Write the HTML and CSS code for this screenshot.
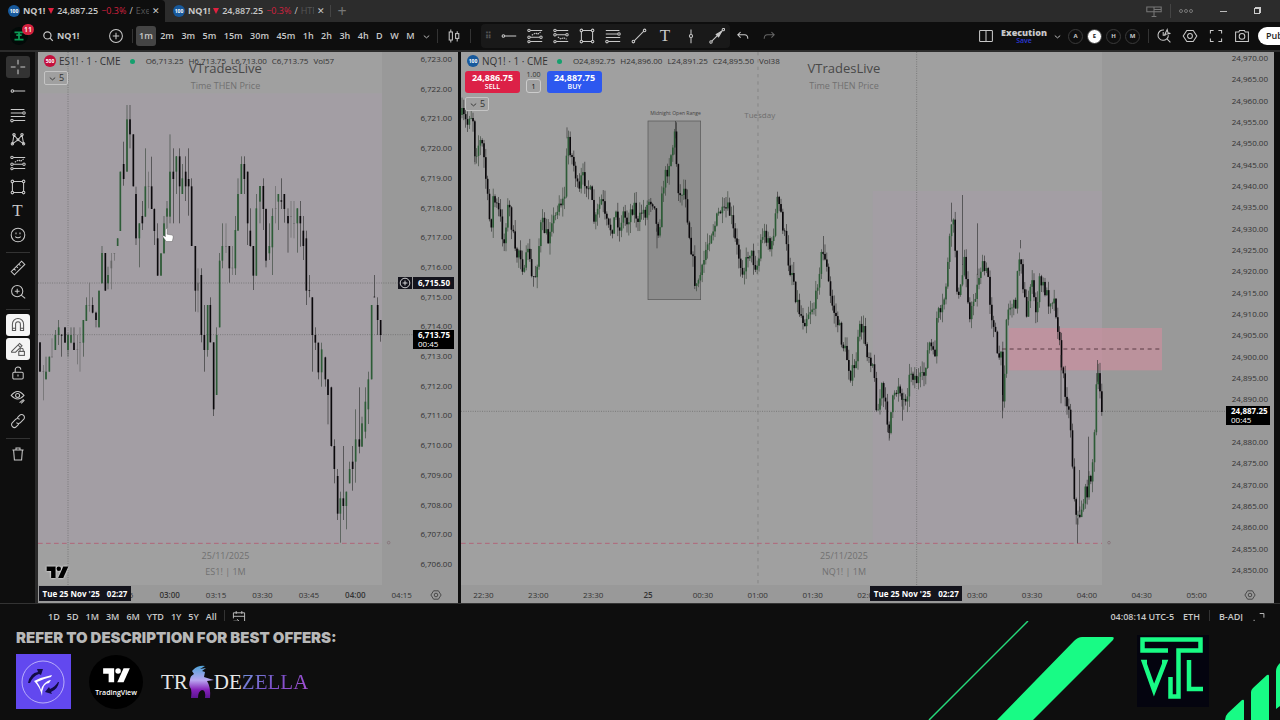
FILE: index.html
```
<!DOCTYPE html>
<html lang="en">
<head>
  <meta charset="UTF-8">
  <meta name="viewport" content="width=device-width, initial-scale=1">
  <title>NQ1! 24,887.25 -0.3% / Execution</title>
  <link rel="stylesheet" href="styles.css">
</head>
<body>

  <!-- ──────────  ICONS  ────────── -->
  <svg class="sprite" aria-hidden="true">
    <symbol id="i-cross" viewBox="0 0 20 20"><path d="M10 1v6M10 13v6M1 10h6M13 10h6"/></symbol>
    <symbol id="i-ray" viewBox="0 0 20 20"><circle cx="3" cy="10" r="1.600"/><path d="M4.600 10H19"/></symbol>
    <symbol id="i-fib" viewBox="0 0 20 20"><path d="M1 3h17M1 7.500h15M1 12h18M4 17h15"/><circle cx="17.500" cy="7.500" r="1.600"/><circle cx="2.500" cy="17" r="1.600"/></symbol>
    <symbol id="i-pattern" viewBox="0 0 20 20"><path d="M3 16 5 5l5 6 5-6 2 11-7-5zM5 5l-2 11"/><circle cx="3" cy="16" r="1.500"/><circle cx="5" cy="4.500" r="1.500"/><circle cx="15" cy="4.500" r="1.500"/><circle cx="17" cy="16" r="1.500"/><circle cx="10" cy="11" r="1.200"/></symbol>
    <symbol id="i-position" viewBox="0 0 20 20"><circle cx="2.500" cy="3" r="1.500"/><path d="M4 3h15M4 11.500h12M4 17h15"/><path d="M6 9l5-3 2 2 4-3" stroke-dasharray="2 1"/><circle cx="2.500" cy="11.500" r="1.500"/><circle cx="17.500" cy="11.500" r="1.500"/><circle cx="2.500" cy="17" r="1.500"/></symbol>
    <symbol id="i-short" viewBox="0 0 20 20"><circle cx="2.500" cy="3" r="1.500"/><path d="M4 3h15M4 8.500h12M4 17h15"/><path d="M6 11l4 3 3-2 4 2" stroke-dasharray="2 1"/><circle cx="2.500" cy="8.500" r="1.500"/><circle cx="17.500" cy="8.500" r="1.500"/><circle cx="2.500" cy="17" r="1.500"/></symbol>
    <symbol id="i-rect" viewBox="0 0 20 20"><path d="M4 3h12M4 17h12M3 4v12M17 4v12"/><circle cx="3" cy="3" r="1.600"/><circle cx="17" cy="3" r="1.600"/><circle cx="3" cy="17" r="1.600"/><circle cx="17" cy="17" r="1.600"/></symbol>
    <symbol id="i-smile" viewBox="0 0 20 20"><circle cx="10" cy="10" r="8.500"/><path d="M7.500 7v2M12.500 7v2M6.500 12q3.500 3 7 0"/></symbol>
    <symbol id="i-ruler" viewBox="0 0 20 20"><path d="M1.500 14.500 14.500 1.500l4 4-13 13zM5 11l2 2M8 8l2 2M11 5l2 2"/></symbol>
    <symbol id="i-zoom" viewBox="0 0 20 20"><circle cx="9" cy="9" r="7"/><path d="M14 14l5 4M6 9h6M9 6v6"/></symbol>
    <symbol id="i-magnet" viewBox="0 0 20 20"><path d="M3 17V9a7 7 0 0 1 14 0v8h-4V9a3 3 0 0 0-6 0v8zM3 14h4M13 14h4"/></symbol>
    <symbol id="i-pencil" viewBox="0 0 20 20"><path d="M2 13 12 3l3 3-8 8H2zM10 5l3 3"/><rect x="11" y="13" width="7" height="5"/><path d="M12.500 13v-2a2 2 0 0 1 4 0v2"/></symbol>
    <symbol id="i-lock" viewBox="0 0 20 20"><rect x="3.500" y="9" width="13" height="8.500" rx="1.500"/><path d="M6.500 9V6a3.500 3.500 0 0 1 7 0M10 12v2.500"/></symbol>
    <symbol id="i-eye" viewBox="0 0 20 20"><path d="M1.500 8q8-10 16 0-8 9-16 0z"/><circle cx="9.500" cy="8" r="2.500"/><path d="M12 17l5-4M14 18l4-4"/></symbol>
    <symbol id="i-link" viewBox="0 0 20 20"><path d="M9 6l3-3a3.500 3.500 0 0 1 5 5l-4 4a3.500 3.500 0 0 1-5 0M11 14l-3 3a3.500 3.500 0 0 1-5-5l4-4a3.500 3.500 0 0 1 5 0"/></symbol>
    <symbol id="i-trash" viewBox="0 0 20 20"><path d="M3 5h14M7.500 5V2.500h5V5M4.500 5l1 12.500h9l1-12.500"/></symbol>
    <symbol id="i-trend" viewBox="0 0 20 20"><path d="M4 16 16 4"/><circle cx="3" cy="17" r="1.600"/><circle cx="17" cy="3" r="1.600"/></symbol>
    <symbol id="i-vline" viewBox="0 0 20 20"><path d="M10 2v6M10 12v7"/><circle cx="10" cy="10" r="2"/></symbol>
    <symbol id="i-arrow" viewBox="0 0 20 20"><path d="M3.500 16.500 17 3"/><path class="solid" d="M9 8l7-4-4 7z"/><circle cx="2.500" cy="17.500" r="1.500"/><circle cx="18" cy="2" r="1.500"/></symbol>
    <symbol id="i-undo" viewBox="0 0 20 20"><path d="M7 5 3.500 8.500 7 12M3.500 8.500H12q4 0 4 5"/></symbol>
    <symbol id="i-redo" viewBox="0 0 20 20"><path d="M13 5l3.500 3.500L13 12M16.500 8.500H8q-4 0-4 5"/></symbol>
    <symbol id="i-candles" viewBox="0 0 20 20"><path d="M6 2v3M6 15v3M14 4v3M14 13v4"/><rect x="4" y="5" width="4" height="10"/><rect x="12" y="7" width="4" height="6"/></symbol>
    <symbol id="i-search" viewBox="0 0 20 20"><circle cx="9" cy="9" r="6"/><path d="M13.500 13.500 18 18"/></symbol>
    <symbol id="i-plus" viewBox="0 0 20 20"><circle cx="10" cy="10" r="8"/><path d="M6 10h8M10 6v8"/></symbol>
    <symbol id="i-caret" viewBox="0 0 20 20"><path d="M4 8l6 5 6-5"/></symbol>
    <symbol id="i-layout" viewBox="0 0 20 20"><rect x="2" y="3" width="16" height="14" rx="1"/><path d="M10 3v14"/></symbol>
    <symbol id="i-replay" viewBox="0 0 20 20"><path d="M10 2.500A6.500 6.500 0 1 0 15.500 9M14 14l4 4M9 5v4h3M11 8l3-6 1 4 3 1z"/></symbol>
    <symbol id="i-hex" viewBox="0 0 20 20"><path d="M6 3h8l4.500 7-4.500 7H6L1.500 10z"/><circle cx="10" cy="10" r="3"/></symbol>
    <symbol id="i-full" viewBox="0 0 20 20"><path d="M3 7V3h4M13 3h4v4M17 13v4h-4M7 17H3v-4"/></symbol>
    <symbol id="i-corner" viewBox="0 0 20 20"><path d="M11 5h6v6M3 14v6h5"/></symbol>
    <symbol id="i-camera" viewBox="0 0 20 20"><path d="M2 5h4l1-2h6l1 2h4v12H2z"/><circle cx="10" cy="10.500" r="3.500"/></symbol>
    <symbol id="i-calendar" viewBox="0 0 20 20"><path d="M2 12V4h16v16M2 9h16M6 1.500v4M14 1.500v4M2 16h8M7 13l3 3-3 3"/></symbol>
    <symbol id="i-sign" viewBox="0 0 20 20"><path d="M1 5h18v6H1zM10 5v12M7 17h6M10 8h9"/></symbol>
    <symbol id="i-tv" viewBox="0 0 36 28"><path class="solid" d="M1 4h14v18H8V11H1z"/><circle class="solid" cx="20" cy="7.500" r="3.500"/><path class="solid" d="M27 4h8l-8 18h-8z"/></symbol>
  </svg>

  <!-- ──────────  TABS  ────────── -->
  <nav class="tabs" aria-label="Open layouts">
    <div class="tab active">
      <span class="badge blue">100</span><b>NQ1!</b><i class="down"></i><b class="price">24,887.25</b><span class="change">−0.3%</span><span>/</span><span class="fade">Exe</span>
      <button class="close" aria-label="Close tab">✕</button>
    </div>
    <div class="tab">
      <span class="badge blue">100</span><b>NQ1!</b><i class="down"></i><b class="price">24,887.25</b><span class="change">−0.3%</span><span>/</span><span class="fade">HTF</span>
      <button class="close" aria-label="Close tab">✕</button>
    </div>
    <button class="new-tab" aria-label="New tab">+</button>
    <div class="window-buttons">
      <svg class="icon dim"><use href="#i-sign"/></svg>
      <span class="sep"></span>
      <span class="more"><i></i><i></i><i></i></span>
      <button aria-label="Minimise"><span class="minimise"></span></button>
      <button aria-label="Restore"><span class="restore"></span></button>
    </div>
  </nav>

  <!-- ──────────  TOOLBAR  ────────── -->
  <header class="toolbar">
    <button class="avatar" aria-label="Account">
      <svg viewBox="0 0 20 20"><path d="M5 6h10M7 9h6M10 6v7M5 14h10"/></svg>
      <span class="count">11</span>
    </button>
    <button class="symbol"><svg class="icon"><use href="#i-search"/></svg>NQ1!</button>
    <button class="tool" aria-label="Compare"><svg class="icon"><use href="#i-plus"/></svg></button>
    <span class="sep"></span>
    <div class="frames">
      <button class="active">1m</button><button>2m</button><button>3m</button><button>5m</button><button>15m</button><button>30m</button><button>45m</button><button>1h</button><button>2h</button><button>3h</button><button>4h</button><button>D</button><button>W</button><button>M</button>
      <button aria-label="More intervals"><svg class="icon tiny"><use href="#i-caret"/></svg></button>
    </div>
    <span class="sep"></span>
    <button class="tool wide" aria-label="Candles"><svg class="icon"><use href="#i-candles"/></svg></button>
    <span class="sep"></span>
    <div class="favourites">
      <span class="grip">⠿</span>
      <button class="tool" aria-label="Horizontal ray"><svg class="icon"><use href="#i-ray"/></svg></button>
      <button class="tool" aria-label="Long position"><svg class="icon"><use href="#i-position"/></svg></button>
      <button class="tool" aria-label="Short position"><svg class="icon"><use href="#i-short"/></svg></button>
      <button class="tool" aria-label="Rectangle"><svg class="icon"><use href="#i-rect"/></svg></button>
      <button class="tool" aria-label="Fib retracement"><svg class="icon"><use href="#i-fib"/></svg></button>
      <button class="tool" aria-label="Trend line"><svg class="icon"><use href="#i-trend"/></svg></button>
      <button class="tool letter">T</button>
      <button class="tool" aria-label="Vertical line"><svg class="icon"><use href="#i-vline"/></svg></button>
      <button class="tool" aria-label="Arrow"><svg class="icon"><use href="#i-arrow"/></svg></button>
    </div>
    <button class="tool" aria-label="Undo"><svg class="icon"><use href="#i-undo"/></svg></button>
    <button class="tool faint" aria-label="Redo"><svg class="icon"><use href="#i-redo"/></svg></button>

    <div class="right-tools">
      <button class="tool" aria-label="Layout"><svg class="icon"><use href="#i-layout"/></svg></button>
      <button class="layout-name"><b>Execution</b><span>Save</span></button>
      <button class="caret" aria-label="Manage layouts"><svg class="icon tiny"><use href="#i-caret"/></svg></button>
      <button class="round">A</button><button class="round active">E</button><button class="round">H</button><button class="round">M</button>
      <span class="sep"></span>
      <button class="tool" aria-label="Quick search"><svg class="icon"><use href="#i-replay"/></svg></button>
      <button class="tool" aria-label="Settings"><svg class="icon"><use href="#i-hex"/></svg></button>
      <button class="tool" aria-label="Fullscreen"><svg class="icon"><use href="#i-full"/></svg></button>
      <button class="tool" aria-label="Snapshot"><svg class="icon"><use href="#i-camera"/></svg></button>
      <button class="publish">Publish</button>
    </div>
  </header>

  <main class="workspace">
    <!-- Drawing tools -->
    <aside class="sidebar">
      <button class="on" aria-label="Cross"><svg class="icon"><use href="#i-cross"/></svg></button>
      <button aria-label="Lines"><svg class="icon"><use href="#i-ray"/></svg></button>
      <button aria-label="Fibonacci"><svg class="icon"><use href="#i-fib"/></svg></button>
      <button aria-label="Patterns"><svg class="icon"><use href="#i-pattern"/></svg></button>
      <button aria-label="Forecast"><svg class="icon"><use href="#i-position"/></svg></button>
      <button aria-label="Shapes"><svg class="icon"><use href="#i-rect"/></svg></button>
      <button class="letter">T</button>
      <button aria-label="Emoji"><svg class="icon"><use href="#i-smile"/></svg></button>
      <hr>
      <button aria-label="Measure"><svg class="icon"><use href="#i-ruler"/></svg></button>
      <button aria-label="Zoom in"><svg class="icon"><use href="#i-zoom"/></svg></button>
      <hr>
      <button class="lit" aria-label="Magnet"><svg class="icon"><use href="#i-magnet"/></svg></button>
      <button class="lit" aria-label="Stay in drawing mode"><svg class="icon"><use href="#i-pencil"/></svg></button>
      <button aria-label="Lock drawings"><svg class="icon"><use href="#i-lock"/></svg></button>
      <button aria-label="Hide drawings"><svg class="icon"><use href="#i-eye"/></svg></button>
      <button aria-label="Sync drawings"><svg class="icon"><use href="#i-link"/></svg></button>
      <hr>
      <button aria-label="Remove"><svg class="icon"><use href="#i-trash"/></svg></button>
    </aside>

    <div class="charts">
      <!-- ES -->
      <section class="chart es">
        <div class="plot">
          <svg class="canvas" viewBox="6 -129 1125 1599" preserveAspectRatio="none">
            <rect class="margin" x="1038" y="-129" width="100" height="1599"/>
            <rect class="session" x="6" y="-5" width="1032" height="1350"/>
            <path class="dots" d="M96-129V1470M6 564H1131M6 719H1131"/>
            <path class="low-line" d="M6 1345H1038"/>
            <circle class="low-mark" cx="1058" cy="1343" r="4"/>
            <g id="esCandles"></g>
          </svg>
          <div class="watermark top"><p class="name">VTradesLive</p><p>Time THEN Price</p></div>
          <div class="watermark bottom"><p>25/11/2025</p><p>ES1! | 1M</p></div>
          <div class="legend">
            <div class="legend-row"><span class="badge red">500</span><span class="title">ES1! · 1 · CME</span><i class="live"></i><span class="ohlc">O6,713.25</span><span class="ohlc">H6,713.75</span><span class="ohlc">L6,713.00</span><span class="ohlc">C6,713.75</span><span class="ohlc">Vol57</span></div>
            <button class="collapse"><svg class="icon tiny"><use href="#i-caret"/></svg>5</button>
          </div>
          <svg class="tv-mark"><use href="#i-tv"/></svg>
          <svg class="hand" viewBox="0 0 14 17"><path d="M4 1q1-1 2 0v6l6 1q1.500 1 1 3l-1 4.500H5L1 10q0-2 2-1l1 1z"/></svg>
        </div>
        <div class="prices" id="esPrices"></div>
        <div class="tag cursor"><button aria-label="Add alert"><svg class="icon"><use href="#i-plus"/></svg></button><b>6,715.50</b></div>
        <div class="tag last"><b>6,713.75</b><span>00:45</span></div>
        <div class="times"><span>02:45</span><b>03:00</b><span>03:15</span><span>03:30</span><span>03:45</span><b>04:00</b><span>04:15</span><svg class="icon"><use href="#i-hex"/></svg></div>
        <b class="time-tag"><span>Tue 25 Nov '25</span><span>02:27</span></b>
      </section>

      <!-- NQ -->
      <section class="chart nq">
        <div class="plot">
          <svg class="canvas" viewBox="9 -129 2298 1599" preserveAspectRatio="none">
            <rect class="margin" x="1932" y="-129" width="400" height="1599"/>
            <rect class="session" x="1244" y="288" width="688" height="1056"/>
            <rect class="range" x="570" y="78" width="158" height="536"/>
            <path class="dash" d="M900-129V1470"/>
            <path class="dots" d="M1376-129V1470M9 949H2307"/>
            <path class="low-line" d="M9 1345H1932"/>
            <circle class="low-mark" cx="1953" cy="1343" r="4"/>
            <rect class="zone" x="1653" y="699" width="459" height="127"/>
            <path class="zone-mid" d="M1632 762H2112"/>
            <g id="nqCandles"></g>
          </svg>
          <div class="watermark top"><p class="name">VTradesLive</p><p>Time THEN Price</p></div>
          <div class="watermark bottom"><p>25/11/2025</p><p>NQ1! | 1M</p></div>
          <span class="note range-note">Midnight Open Range</span>
          <span class="note day-note">Tuesday</span>
          <div class="legend">
            <div class="legend-row"><span class="badge blue">100</span><span class="title">NQ1! · 1 · CME</span><i class="live"></i><span class="ohlc">O24,892.75</span><span class="ohlc">H24,896.00</span><span class="ohlc">L24,891.25</span><span class="ohlc">C24,895.50</span><span class="ohlc">Vol38</span></div>
            <div class="order-row">
              <button class="order sell"><b>24,886.75</b><span>SELL</span></button>
              <label class="qty"><span>1.00</span><input type="text" value="1"></label>
              <button class="order buy"><b>24,887.75</b><span>BUY</span></button>
            </div>
            <button class="collapse"><svg class="icon tiny"><use href="#i-caret"/></svg>5</button>
          </div>
        </div>
        <div class="prices" id="nqPrices"></div>
        <div class="tag last"><b>24,887.25</b><span>00:45</span></div>
        <div class="times"><span>22:30</span><span>23:00</span><span>23:30</span><b>25</b><span>00:30</span><span>01:00</span><span>01:30</span><span>02:00</span><span></span><span>03:00</span><span>03:30</span><span>04:00</span><span>04:30</span><span>05:00</span><svg class="icon"><use href="#i-hex"/></svg></div>
        <b class="time-tag"><span>Tue 25 Nov '25</span><span>02:27</span></b>
      </section>
    </div>
  </main>

  <!-- ──────────  RANGE BAR  ────────── -->
  <div class="range-bar">
    <button>1D</button><button>5D</button><button>1M</button><button>3M</button><button>6M</button><button>YTD</button><button>1Y</button><button>5Y</button><button>All</button>
    <span class="sep"></span>
    <button aria-label="Go to date"><svg class="icon"><use href="#i-calendar"/></svg></button>
    <div class="session-info"><button>04:08:14 UTC-5</button><button>ETH</button><span class="sep"></span><button>B-ADJ</button><button aria-label="Maximise"><svg class="icon"><use href="#i-corner"/></svg></button></div>
  </div>

  <!-- ──────────  SPONSORS  ────────── -->
  <footer class="footer">
    <h2>REFER TO DESCRIPTION FOR BEST OFFERS:</h2>
    <div class="sponsors">
      <svg class="purple-logo" viewBox="0 0 55 55">
        <circle cx="27" cy="28" r="21"/>
        <path class="navy" d="M12 29Q14 19 22 18l-1-3 6 0-2 6-2-1q-6 2-9 9zM43 28q-1 7-8 10l1 2-7-2 4-5 1 2q5-2 8-7z"/>
        <path class="white" d="M18 27q8-4 18-6l-1 2q-8 2-14 5 3 4 4 8 1-4 3-6 4-4 7-4l-2 3q-3 0-5 3-2 4-2 10-2-9-8-15z"/>
      </svg>
      <div class="tv-logo"><svg><use href="#i-tv"/></svg><span>TradingView</span></div>
      <div class="zella">
        <span>TR</span>
        <svg viewBox="0 0 26 34">
          <defs><linearGradient id="beast" x2="0" y2="1"><stop offset="0" stop-color="#4fa3d8"/><stop offset=".45" stop-color="#b9a5f0"/><stop offset=".75" stop-color="#8420b8"/><stop offset="1" stop-color="#5b1690"/></linearGradient></defs>
          <path fill="url(#beast)" d="M5 5Q10 0 17 1l-5 3 6-1-4 3 3 1-1 5q6 2 10 3l-7 1q4 6 3 17h-5q1-8-3-8-4 1-4 8H3q1-5 0-9-3-4-1-9 0-4 4-6l-2-3z"/>
        </svg>
        <span>DE</span><span class="tint">ZELLA</span>
      </div>
    </div>
    <svg class="stripes" viewBox="920 621 360 99">
      <path class="line" d="M929 720 1028 621"/>
      <path d="M997 720 1074 641q4-4 8-4h30q3 0 1 3l-80 80zM1225 720q0-4 3-7l14-13q2-1 2 1v19zM1251 720v-28q0-2 2-4l14-13q2-1 2 1v44zM1276 709v-38q0-4 4-8v43z"/>
    </svg>
    <svg class="vtl" viewBox="0 0 72 72">
      <path d="M31 15.500H5.500v-11h58v11H41.500v46h-8V42M10 27H7l10 28L28 27h-3M52 25v29h14"/>
    </svg>
  </footer>

  <script>
    // Price scales
    function fillPrices(id, from, to, step) {
      const box = document.getElementById(id);
      for (let p = from; p >= to; p -= step) {
        const el = document.createElement('span');
        el.textContent = p === 24885 ? '\u00a0' : p.toLocaleString('en-US', { minimumFractionDigits: 2 });
        box.appendChild(el);
      }
    }
    fillPrices('esPrices', 6723, 6706, 1);
    fillPrices('nqPrices', 24970, 24850, 5);

    function shape(cls, x, y1, y2, w) {
      return `<rect class="${cls}" x="${x - w / 2}" y="${y1}" width="${w}" height="${Math.max(y2 - y1, 2)}"/>`;
    }

    // ES candles: x, high, low, body top, body bottom, kind (g up, k down, n flat)
    const es = `12 742 830 742 830 k,22 810 916 829 831 n,30 785 853 830 853 g,40 785 830 785 830 g,48 730 787 785 787 n,58 705 765 720 765 g,68 675 750 697 720 g,77 718 785 719 722 k,87 697 743 697 743 k,96 715 785 720 765 g,105 697 745 720 743 g,114 697 765 743 765 k,124 720 808 763 765 n,132 697 830 742 744 n,142 675 785 675 743 g,151 607 678 630 678 g,160 563 650 630 632 n,170 607 655 630 653 k,180 650 697 653 675 k,189 587 697 587 697 g,198 453 565 474 565 g,208 474 587 474 587 k,216 515 583 540 565 g,226 474 583 497 520 n,235 474 497 474 476 n,245 430 453 430 453 g,253 230 408 230 408 g,263 140 272 207 252 k,273 30 230 73 230 g,282 30 160 73 118 k,292 118 274 118 274 k,300 275 450 297 430 k,310 385 517 385 430 g,319 318 405 363 385 k,328 160 365 274 365 g,338 230 340 273 275 n,347 185 342 274 342 k,355 340 450 342 408 k,365 385 542 430 542 k,375 475 542 475 542 g,384 363 475 385 475 g,393 318 400 340 365 g,402 118 385 230 365 g,412 160 385 230 252 k,421 183 297 184 230 g,431 160 385 184 274 k,439 207 297 250 297 g,449 184 318 230 274 k,458 160 362 252 274 k,467 250 453 274 453 k,478 453 650 453 587 k,486 520 652 563 587 n,496 520 742 540 720 k,505 630 830 720 765 k,515 630 785 630 765 g,523 607 742 630 742 k,533 742 963 742 943 k,542 697 900 720 900 g,551 474 697 497 697 g,559 385 520 453 497 g,570 385 474 453 455 n,580 453 563 453 520 k,589 453 540 518 520 n,598 363 540 405 520 g,606 250 407 297 407 g,616 184 297 207 297 g,625 184 297 207 252 k,635 230 450 230 385 k,643 340 455 407 453 k,652 453 585 453 542 k,661 297 542 340 542 g,672 273 385 273 320 g,682 250 405 273 342 k,690 340 517 342 497 k,700 385 495 453 475 g,709 340 540 363 457 g,719 273 385 340 342 n,727 297 405 297 320 g,736 250 342 316 320 k,745 297 383 297 342 k,756 340 473 363 385 k,765 318 428 363 365 n,774 318 430 385 387 n,784 340 473 340 385 g,793 318 455 363 385 k,802 363 495 407 453 k,811 407 630 430 587 k,820 540 607 585 587 k,829 607 830 607 720 k,838 697 765 720 743 k,847 743 853 743 832 k,857 743 875 763 832 g,868 785 875 787 853 k,876 853 988 853 900 k,886 875 1055 877 1053 k,895 1033 1165 1053 1122 k,905 1122 1275 1143 1256 k,913 1190 1343 1210 1256 g,922 1053 1275 1210 1233 k,931 1190 1303 1190 1233 g,941 1100 1165 1122 1165 g,950 1053 1187 1100 1122 k,959 943 1163 1033 1100 g,970 877 1075 1033 1055 k,978 965 1055 985 1055 g,988 877 1030 920 1010 g,997 830 987 853 943 g,1007 630 853 630 853 g,1015 540 607 605 607 k,1025 607 720 630 675 k,1034 675 740 675 720 k`;
    document.getElementById('esCandles').innerHTML = es.split(',').map(row => {
      const [x, high, low, top, bottom, kind] = row.split(' ');
      return shape('wick ' + kind, +x, +high, +low, 2) + shape('body ' + kind, +x, +top, +bottom, 5);
    }).join('');

    // NQ closes, one candle every 5.5 units between these points
    const nq = [
      [10,60],[20,75],[28,90],[35,50],[45,70],[51,178],[60,150],[68,140],[75,160],[82,230],[90,330],[98,405],[105,310],[115,330],[125,360],[138,450],[147,340],[155,345],[165,420],[173,495],[183,460],[190,480],[198,550],[210,450],[220,550],[232,540],[242,460],[250,380],[262,410],[270,440],[280,360],[290,380],[300,320],[315,320],[322,290],[325,205],[330,120],[340,180],[352,230],[362,310],[370,250],[385,255],[398,300],[410,390],[425,330],[433,310],[440,370],[452,405],[465,390],[475,350],[485,410],[493,350],[507,380],[520,340],[530,330],[540,395],[552,345],[562,350],[575,310],[590,320],[597,420],[607,370],[615,270],[630,215],[645,150],[652,110],[657,240],[665,310],[675,275],[685,300],[690,390],[700,460],[708,530],[714,590],[722,550],[733,530],[742,470],
      [751,435],[758,410],[771,390],[786,345],[796,365],[806,340],[818,360],[828,425],[838,465],[851,515],[861,520],[873,460],[884,490],[896,515],[904,485],[911,415],[931,425],[939,480],[948,395],[959,315],[969,355],[976,400],[986,465],[994,520],[1004,530],[1014,605],[1026,655],[1039,675],[1051,650],[1061,635],[1071,635],[1081,535],[1091,480],[1101,480],[1109,545],[1119,620],[1131,655],[1143,695],[1151,735],[1166,785],[1178,835],[1189,830],[1199,755],[1203,710],[1214,695],[1226,765],[1244,800],[1253,905],[1259,955],[1271,875],[1281,935],[1294,1000],[1302,925],[1311,910],[1323,855],[1334,925],[1346,895],[1359,825],[1376,855],[1396,855],[1404,795],
      [1416,740],[1429,805],[1438,645],[1448,675],[1461,595],[1471,495],[1481,375],[1489,405],[1496,555],[1501,625],[1511,565],[1519,485],[1526,545],[1536,685],[1546,615],[1558,575],[1566,515],[1578,525],[1591,545],[1598,645],[1611,695],[1618,795],[1628,775],[1636,925],[1640,815],[1646,655],[1661,625],[1671,645],[1679,535],[1687,455],[1694,555],[1706,675],[1718,545],[1733,655],[1744,565],[1758,575],[1771,615],[1786,605],[1796,655],[1806,765],[1816,855],[1829,925],[1838,995],[1846,1155],[1856,1285],[1866,1255],[1879,1205],[1891,1175],[1901,1125],[1909,1045],[1914,875],[1921,855],[1926,895],[1932,945]
    ];
    // long wicks: x, high, low
    const spikes = [[327,97,130],[652,78,130],[51,160,208],[597,400,460],[959,290,320],[1096,423,480],[1294,1000,1030],[1513,300,510],[1558,385,540],[1634,900,970],[1858,1270,1345],[1891,1025,1170],[1865,1125,1250],[1919,795,860],[1809,780,925],[1333,900,977],[1481,323,380],[1687,435,460]];

    let seed = 7;
    const rand = () => (seed = (seed * 16807) % 2147483647) / 2147483647;
    let open = 60, k = 0, out = '';
    for (let x = 12; x <= 1932; x += 5.5) {
      while (k < nq.length - 2 && nq[k + 1][0] < x) k++;
      const [x0, y0] = nq[k], [x1, y1] = nq[k + 1];
      const close = y0 + (y1 - y0) * (x - x0) / (x1 - x0) + (rand() - 0.5) * 48;
      const top = Math.min(open, close), bottom = Math.max(open, close);
      const kind = close < open ? 'g' : 'k';
      out += shape('wick ' + kind, x, top - rand() * 34, bottom + rand() * 34, 2) + shape('body ' + kind, x, top, bottom, 5);
      open = close;
    }
    spikes.forEach(([x, high, low]) => out += shape('wick k', x, high, low, 2));
    document.getElementById('nqCandles').innerHTML = out;
  </script>
</body>
</html>
```
FILE: styles.css
```
/* Page layout */
* {
  box-sizing: border-box;
}
body {
  margin: 0;
  min-height: 100vh;
  display: flex;
  flex-direction: column;
  background: #0e0e0e;
  color: #c8c8c8;
  font-family: "Open Sans", "Noto Sans", sans-serif;
  font-size: 9px;
  line-height: 12px;
  overflow-x: hidden;
}
button {
  background: none;
  border: none;
  padding: 0;
  color: inherit;
  font: inherit;
  cursor: pointer;
}
p {
  margin: 0;
}
.sprite {
  display: none;
}
.icon {
  width: 16px;
  height: 16px;
  display: block;
  flex: none;
  fill: none;
  stroke: currentColor;
  stroke-width: 1.3;
}
.icon.tiny {
  width: 9px;
  height: 9px;
  stroke-width: 2;
}
.icon.dim {
  color: #777;
}
.solid {
  fill: currentColor;
}
.sep {
  width: 1px;
  height: 14px;
  background: #333;
  flex: none;
}
.badge {
  width: 12px;
  height: 12px;
  border-radius: 50%;
  flex: none;
  color: #fff;
  font-size: 5px;
  font-weight: 700;
  text-align: center;
}
.badge.blue {
  background: #17599c;
}
.badge.red {
  background: #c40f3c;
}

/* Tabs */
.tabs {
  height: 22px;
  display: flex;
  align-items: center;
  background: #2c2c2c;
}
.tab {
  width: 165px;
  height: 22px;
  padding: 0 5px 0 8px;
  display: flex;
  align-items: center;
  gap: 3px;
}
.tab.active {
  background: #0e0e0e;
  border-radius: 0 4px 0 0;
}
.tab .price {
  font-weight: 600;
}
.down {
  border: 3px solid transparent;
  border-top: 6px solid #e0213f;
  border-bottom: 0;
}
.change {
  color: #d3213f;
}
.fade {
  width: 14px;
  overflow: hidden;
  color: #555;
}
.close {
  margin-left: auto;
}
.new-tab {
  width: 23px;
  border-left: 1px solid #444;
  color: #777;
  font-size: 16px;
}
.window-buttons {
  margin-left: auto;
  padding-right: 20px;
  display: flex;
  align-items: center;
  gap: 27px;
}
.window-buttons .sep {
  margin: 0 -19px;
  background: #444;
}
.more {
  display: flex;
  gap: 1px;
}
.more i {
  width: 4px;
  height: 4px;
  border: 1px solid #777;
  border-radius: 50%;
}
.minimise {
  display: block;
  width: 7px;
  height: 1px;
  background: #bbb;
}
.restore {
  display: block;
  width: 6px;
  height: 6px;
  border: 1px solid #ccc;
  box-shadow: 1px -1px 0 #ccc;
}

/* Toolbar */
.toolbar {
  height: 30px;
  display: flex;
  align-items: center;
  overflow: hidden;
  border-bottom: 2px solid #2c2c2c;
  font-weight: 600;
}
.toolbar .sep {
  margin: 0 3px;
}
.avatar {
  position: relative;
  width: 38px;
  height: 24px;
}
.avatar svg {
  width: 18px;
  height: 18px;
  margin-top: 3px;
  border-radius: 50%;
  background: #020a08;
  fill: none;
  stroke: #0c9c56;
  stroke-width: 2;
}
.count {
  position: absolute;
  top: 0;
  right: 4px;
  width: 12px;
  height: 11px;
  border-radius: 6px;
  background: #d3213f;
  color: #fff;
  font-size: 7px;
  line-height: 11px;
}
.symbol {
  width: 65px;
  padding-left: 4px;
  display: flex;
  align-items: center;
  gap: 3px;
  font-weight: 700;
}
.symbol .icon {
  width: 12px;
  height: 12px;
  stroke-width: 2;
}
.tool {
  width: 26px;
  height: 24px;
  display: flex;
  align-items: center;
  justify-content: center;
  flex: none;
}
.tool.faint {
  color: #666;
}
.letter {
  font-family: "Liberation Serif", serif;
  font-size: 17px;
  font-weight: 400;
}
.frames {
  width: 298px;
  display: flex;
  align-items: center;
  justify-content: space-between;
}
.frames button {
  padding: 0 3px;
  height: 20px;
  border-radius: 3px;
}
.frames .active {
  background: #444;
}
.favourites {
  margin-left: 7px;
  display: flex;
  align-items: center;
  background: #191919;
  border-radius: 4px;
}
.grip {
  width: 15px;
  color: #555;
  text-align: center;
}
.right-tools {
  margin-left: auto;
  margin-right: -28px;
  display: flex;
  align-items: center;
}
.layout-name {
  width: 50px;
  display: flex;
  flex-direction: column;
  align-items: center;
  line-height: 9px;
}
.layout-name span {
  color: #2b39d8;
  font-size: 7px;
  line-height: 7px;
}
.caret {
  width: 17px;
  display: flex;
  justify-content: center;
}
.round {
  width: 15px;
  height: 15px;
  margin: 0 2px;
  border: 1px solid #3a3a3a;
  border-radius: 50%;
  font-size: 6px;
  font-weight: 700;
}
.round.active {
  background: #fff;
  color: #222;
}
.right-tools .sep {
  margin: 0 2px 0 6px;
}
.publish {
  width: 50px;
  height: 18px;
  margin-left: 3px;
  padding-right: 2px;
  border-radius: 9px;
  background: #fff;
  color: #222;
}

/* Sidebar */
.workspace {
  flex: 1;
  display: flex;
  padding-right: 6px;
}
.sidebar {
  width: 38px;
  padding-top: 4px;
  display: flex;
  flex-direction: column;
  align-items: center;
  border-right: 3px solid #2a2a2a;
}
.sidebar button {
  width: 24px;
  height: 22px;
  margin-bottom: 2px;
  display: flex;
  align-items: center;
  justify-content: center;
  border-radius: 3px;
}
.sidebar .on {
  background: #333;
}
.sidebar .lit {
  background: #f4f4f4;
  color: #555;
}
.sidebar hr {
  width: 24px;
  margin: 4px 0;
  border: none;
  border-top: 1px solid #333;
}

/* Charts */
.charts {
  flex: 1;
  display: grid;
  grid-template-columns: 420fr 813fr;
  gap: 3px;
}
.chart {
  position: relative;
  display: grid;
  grid-template-columns: 1fr 45px;
  grid-template-rows: 1fr 18px;
  min-width: 0;
  background: #999;
  color: #333;
}
.chart.nq {
  grid-template-columns: 1fr 47px;
}
.plot {
  position: relative;
  overflow: hidden;
  background: #a0a0a0;
}
.canvas {
  position: absolute;
  width: 100%;
  height: 100%;
}
.margin {
  fill: #999;
}
.session {
  fill: #a39ea4;
}
.range {
  fill: #8e8e8e;
  stroke: #555;
  stroke-width: 2;
}
.dots {
  stroke: #666;
  stroke-width: 2;
  stroke-dasharray: 3 4;
}
.dash {
  stroke: #858585;
  stroke-width: 3;
  stroke-dasharray: 10 12;
}
.low-line {
  stroke: #b0657a;
  stroke-width: 3;
  stroke-dasharray: 14 10;
}
.low-mark {
  fill: none;
  stroke: #806870;
  stroke-width: 2;
}
.zone {
  fill: #c98f9c;
  fill-opacity: 0.7;
}
.zone-mid {
  stroke: #5a3b44;
  stroke-width: 3;
  stroke-dasharray: 12 11;
}
.wick {
  fill: #333;
}
.wick.n {
  fill: #666;
}
.wick.g {
  fill: #3e4a3f;
}
.body {
  fill: #0a080b;
}
.body.g {
  fill: #2d5c37;
}
.body.n {
  fill: #666;
}

/* Text over the plots */
.watermark {
  position: absolute;
  left: 0;
  right: 0;
  text-align: center;
  color: #707070;
}
.watermark.top {
  top: 7px;
  line-height: 18px;
}
.watermark.bottom {
  bottom: 5px;
  line-height: 16px;
}
.watermark .name {
  color: #484848;
  font-size: 13px;
}
.legend {
  position: absolute;
  top: 3px;
  left: 6px;
}
.legend-row {
  display: flex;
  align-items: center;
  gap: 5px;
  white-space: nowrap;
}
.legend .title {
  margin-left: -2px;
  font-size: 10px;
}
.legend .ohlc {
  font-size: 8px;
}
.live {
  width: 5px;
  height: 5px;
  margin: 0 6px 0 4px;
  border-radius: 50%;
  background: #15a06e;
}
.collapse {
  margin-top: 4px;
  padding: 0 3px;
  display: flex;
  align-items: center;
  gap: 2px;
  border: 1px solid #c4c4c4;
  border-radius: 2px;
}
.nq .collapse {
  margin-left: -2px;
}
.order-row {
  margin: 4px 0 4px -2px;
  display: flex;
  align-items: center;
  gap: 6px;
}
.order {
  width: 55px;
  height: 22px;
  border-radius: 3px;
  color: #fff;
  line-height: 9px;
}
.order b,
.order span {
  display: block;
}
.order span {
  font-size: 7px;
  font-weight: 600;
}
.sell {
  background: #dc2147;
}
.buy {
  background: #2d58ef;
}
.qty {
  width: 15px;
  display: flex;
  flex-direction: column;
  align-items: center;
  font-size: 7px;
  line-height: 8px;
}
.qty input {
  width: 15px;
  height: 14px;
  padding: 0;
  border: 1px solid #ccc;
  border-radius: 3px;
  background: none;
  font: inherit;
  text-align: center;
}
.note {
  position: absolute;
  transform: translateX(-50%);
  color: #6f6f6f;
  white-space: nowrap;
}
.range-note {
  left: 28%;
  top: 55px;
  color: #444;
  font-size: 5px;
}
.day-note {
  left: 39%;
  top: 57px;
  font-size: 8px;
}
.tv-mark {
  position: absolute;
  left: 8px;
  bottom: 3px;
  width: 23px;
  height: 18px;
  color: #000;
  filter: drop-shadow(0 0 1px #fff);
}
.hand {
  position: absolute;
  left: 33%;
  top: 33%;
  width: 12px;
  height: 15px;
  fill: #fff;
  stroke: #555;
  stroke-width: 0.5;
}

/* Scales */
.prices {
  padding: 1px 6px 15px 0;
  display: flex;
  flex-direction: column;
  justify-content: space-between;
  text-align: right;
  font-size: 8px;
}
.nq .prices {
  padding-bottom: 9px;
  padding-top: 0;
}
.tag {
  position: absolute;
  right: 4px;
  width: 41px;
  padding-left: 5px;
  display: flex;
  flex-direction: column;
  background: #000;
  color: #fff;
  font-size: 8px;
  line-height: 9px;
}
.nq .tag {
  width: 44px;
}
.last {
  padding-bottom: 1px;
}
.es .last {
  top: 278px;
}
.nq .last {
  top: 354px;
}
.cursor {
  top: 225px;
  background: #14141c;
  line-height: 12px;
}
.cursor button {
  position: absolute;
  right: 42px;
  width: 14px;
  height: 12px;
  background: #14141c;
}
.cursor .icon {
  width: 12px;
  height: 12px;
  margin: 0 auto;
}
.times {
  grid-column: 1 / 3;
  padding: 2px 0 0 62px;
  display: flex;
  align-items: center;
  font-size: 8px;
  text-align: center;
}
.times span,
.times b {
  flex: 1;
}
.times b {
  font-weight: 600;
}
.times .icon {
  width: 12px;
  height: 12px;
  margin: 0 16px 0 5px;
}
.nq .times {
  margin-left: -5px;
  padding-left: 0;
}
.nq .times .icon {
  margin: 0 18px 0 20px;
}
.time-tag {
  position: absolute;
  left: 1px;
  bottom: 2px;
  width: 92px;
  padding: 2px 0 1px;
  display: flex;
  justify-content: center;
  gap: 7px;
  background: #14141c;
  color: #fff;
  font-size: 8px;
  white-space: nowrap;
}
.nq .time-tag {
  left: 56%;
  transform: translateX(-50%);
}

/* Range bar */
.range-bar {
  height: 18px;
  padding: 0 14px 0 48px;
  display: flex;
  align-items: flex-start;
  gap: 7px;
  overflow: hidden;
  border-top: 1px solid #333;
  font-weight: 600;
}
.range-bar button {
  height: 26px;
}
.range-bar .sep {
  margin-top: 6px;
}
.range-bar .icon {
  width: 14px;
  height: 14px;
}
.session-info {
  margin-left: auto;
  display: flex;
  gap: 9px;
}

/* Footer */
.footer {
  position: relative;
  height: 99px;
  padding: 8px 16px;
}
.footer h2 {
  margin: 0 0 8px;
  color: #b8b8b8;
  font-family: Inter, sans-serif;
  font-size: 15px;
  font-weight: 900;
  line-height: 17px;
}
.sponsors {
  display: flex;
  align-items: center;
  gap: 18px;
}
.purple-logo {
  width: 55px;
  height: 55px;
  background: #6248ef;
}
.purple-logo circle {
  fill: none;
  stroke: #b9aefa;
}
.purple-logo .navy {
  fill: #120c45;
}
.purple-logo .white {
  fill: #fff;
}
.tv-logo {
  width: 54px;
  height: 54px;
  display: flex;
  flex-direction: column;
  align-items: center;
  justify-content: center;
  border-radius: 50%;
  background: #000;
  color: #fff;
  font-size: 7px;
  font-weight: 600;
}
.tv-logo svg {
  width: 29px;
  height: 22px;
}
.zella {
  display: flex;
  align-items: center;
  color: #e6e6e6;
  font-family: "Liberation Serif", serif;
  font-size: 21px;
  line-height: 34px;
}
.zella svg {
  width: 26px;
  height: 34px;
}
.zella .tint {
  background: linear-gradient(135deg, #6fa0e0, #7b50c8, #b04fd6);
  background-clip: text;
  color: transparent;
}
.stripes {
  position: absolute;
  right: 0;
  top: 0;
  width: 360px;
  height: 99px;
  fill: #18fb85;
}
.stripes .line {
  stroke: #25d97b;
  stroke-width: 1.5;
}
.vtl {
  position: absolute;
  right: 71px;
  top: 14px;
  width: 72px;
  height: 72px;
  background: #04040f;
  fill: none;
  stroke: #18fb85;
  stroke-width: 4.5;
}
```
